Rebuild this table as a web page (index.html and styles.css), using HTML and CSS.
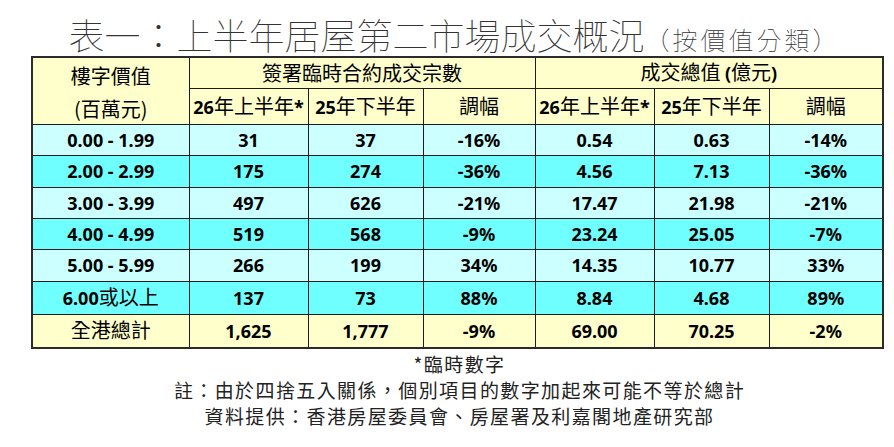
FILE: index.html
```html
<!DOCTYPE html>
<html lang="zh-Hant">
<head>
<meta charset="utf-8">
<title>表一：上半年居屋第二市場成交概況</title>
<link rel="stylesheet" href="styles.css">
</head>
<body>
<div class="page">
  <h1 class="title">表一：上半年居屋第二市場成交概況<span class="sub">（按價值分類）</span></h1>
  <table class="tbl">
    <colgroup>
      <col class="c1"><col class="c2"><col class="c3"><col class="c4"><col class="c5"><col class="c6"><col class="c7">
    </colgroup>
    <thead>
      <tr class="h1">
        <th class="first-top">樓字價值</th>
        <th colspan="3">簽署臨時合約成交宗數</th>
        <th colspan="3">成交總值 <b>(</b>億元<b>)</b></th>
      </tr>
      <tr class="h2">
        <th class="first-bot">(百萬元)</th>
        <th><b>26</b>年上半年<b>*</b></th>
        <th><b>25</b>年下半年</th>
        <th>調幅</th>
        <th><b>26</b>年上半年<b>*</b></th>
        <th><b>25</b>年下半年</th>
        <th>調幅</th>
      </tr>
    </thead>
    <tbody>
      <tr class="lt r1"><td>0.00 - 1.99</td><td>31</td><td>37</td><td>-16%</td><td>0.54</td><td>0.63</td><td>-14%</td></tr>
      <tr class="dk r2"><td>2.00 - 2.99</td><td>175</td><td>274</td><td>-36%</td><td>4.56</td><td>7.13</td><td>-36%</td></tr>
      <tr class="lt r3"><td>3.00 - 3.99</td><td>497</td><td>626</td><td>-21%</td><td>17.47</td><td>21.98</td><td>-21%</td></tr>
      <tr class="dk r4"><td>4.00 - 4.99</td><td>519</td><td>568</td><td>-9%</td><td>23.24</td><td>25.05</td><td>-7%</td></tr>
      <tr class="lt r5"><td>5.00 - 5.99</td><td>266</td><td>199</td><td>34%</td><td>14.35</td><td>10.77</td><td>33%</td></tr>
      <tr class="dk r6"><td>6.00<span class="zh">或以上</span></td><td>137</td><td>73</td><td>88%</td><td>8.84</td><td>4.68</td><td>89%</td></tr>
      <tr class="tot r7"><td><span class="zh">全港總計</span></td><td>1,625</td><td>1,777</td><td>-9%</td><td>69.00</td><td>70.25</td><td>-2%</td></tr>
    </tbody>
  </table>
  <div class="notes">
    <p class="note n1">*臨時數字</p>
    <p class="note">註：由於四捨五入關係，個別項目的數字加起來可能不等於總計</p>
    <p class="note">資料提供：香港房屋委員會、房屋署及利嘉閣地產研究部</p>
  </div>
</div>
</body>
</html>
```

FILE: styles.css
```css
html, body {
  margin: 0;
  padding: 0;
  background: #ffffff;
}

.page {
  width: 851px;
  padding: 13px 0 0 31px;
}

.title {
  margin: 0;
  height: 43px;
  font-family: "Noto Sans CJK TC", "Noto Sans CJK SC", sans-serif;
  font-weight: 100;
  font-size: 36px;
  line-height: 43px;
  color: #333333;
  text-align: center;
  white-space: nowrap;
  padding-right: 4px;
}

.title .sub {
  font-size: 25px;
  letter-spacing: 3px;
}

.tbl {
  width: 851px;
  table-layout: fixed;
  border-collapse: collapse;
  border: 2px solid #2b2b2b;
  font-family: "Noto Sans", "Noto Sans CJK TC", sans-serif;
  color: #000000;
}

.c1 { width: 157px; }
.c2 { width: 119px; }
.c3 { width: 115px; }
.c4 { width: 112px; }
.c5 { width: 119px; }
.c6 { width: 115px; }
.c7 { width: 114px; }

.tbl th,
.tbl td {
  border: 1px solid #1c1c1c;
  padding: 0;
  text-align: center;
  vertical-align: middle;
  white-space: nowrap;
}

.tbl th {
  background: #ffffcc;
  font-family: "Noto Sans CJK TC", sans-serif;
  font-weight: 400;
  font-size: 20px;
  line-height: 24px;
}

.tbl th b {
  font-family: "Noto Sans", sans-serif;
  font-weight: 700;
  font-size: 18px;
}

.tbl th.first-top {
  border-bottom-style: hidden;
  padding-top: 6px;
}

.tbl th.first-bot {
  padding-top: 6px;
}

.tbl td {
  font-weight: 700;
  font-size: 18px;
  line-height: 24px;
}

.tbl td .zh {
  font-family: "Noto Sans CJK TC", sans-serif;
  font-weight: 400;
  font-size: 20px;
}

.h1 { height: 31px; }
.h2 { height: 36px; }
.r1 { height: 31px; }
.r2 { height: 32px; }
.r3 { height: 31px; }
.r4 { height: 31px; }
.r5 { height: 32px; }
.r6 { height: 33px; }
.r7 { height: 34px; }

.lt td { background: #ccffff; }
.dk td { background: #70ffff; }
.tot td { background: #ffffcc; }

.notes {
  padding-top: 2px;
  padding-left: 6px;
  font-family: "Noto Sans CJK TC", sans-serif;
  font-weight: 400;
  color: #222222;
  text-align: center;
}

.note {
  margin: 0;
  font-size: 19px;
  line-height: 26px;
  letter-spacing: 1.4px;
}
```
